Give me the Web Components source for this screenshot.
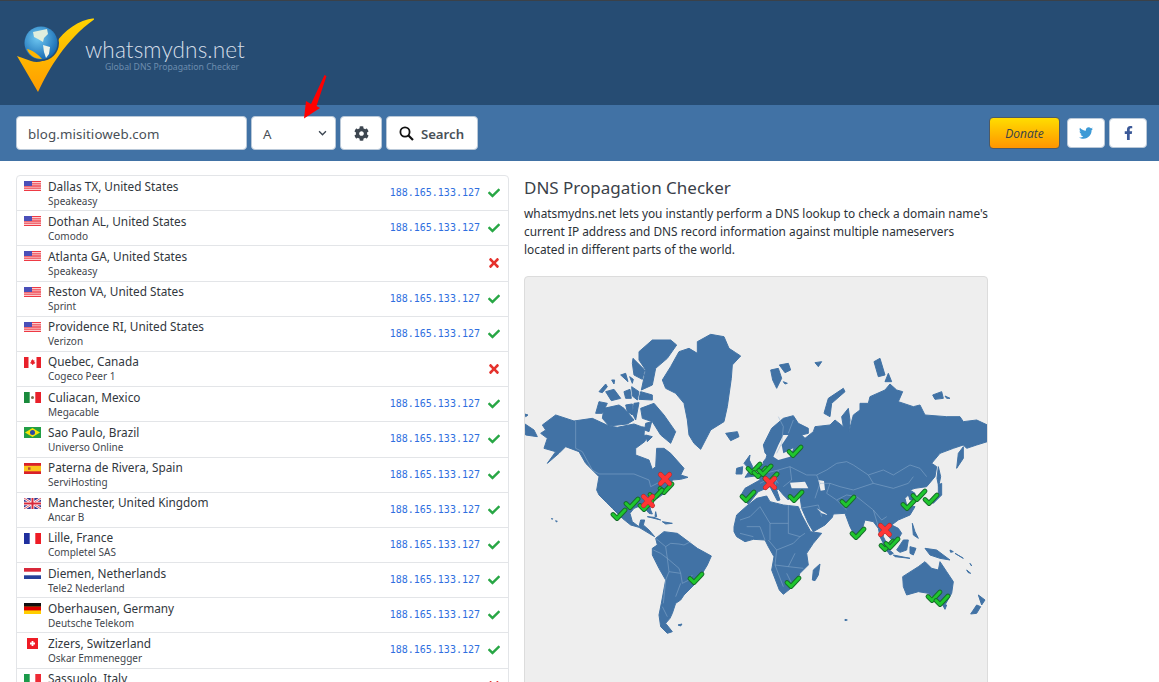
<!DOCTYPE html>
<html>
<head>
<meta charset="utf-8">
<title>DNS Propagation Checker</title>
<style>
html, body { margin: 0; height: 682px; overflow: hidden; background: #fff; }
body { font-family: "Noto Sans", "Open Sans", sans-serif; color: #212529; position: relative; }
</style>
</head>
<body>
<site-header></site-header>
<search-bar domain="blog.misitioweb.com" type="A"></search-bar>
<page-main>
    <result-list slot="list"></result-list>
    <intro-panel slot="side"></intro-panel>
</page-main>
<red-arrow></red-arrow>

<script>
const RESULTS = [
    ['us', 'Dallas TX, United States', 'Speakeasy', true],
    ['us', 'Dothan AL, United States', 'Comodo', true],
    ['us', 'Atlanta GA, United States', 'Speakeasy', false],
    ['us', 'Reston VA, United States', 'Sprint', true],
    ['us', 'Providence RI, United States', 'Verizon', true],
    ['ca', 'Quebec, Canada', 'Cogeco Peer 1', false],
    ['mx', 'Culiacan, Mexico', 'Megacable', true],
    ['br', 'Sao Paulo, Brazil', 'Universo Online', true],
    ['es', 'Paterna de Rivera, Spain', 'ServiHosting', true],
    ['gb', 'Manchester, United Kingdom', 'Ancar B', true],
    ['fr', 'Lille, France', 'Completel SAS', true],
    ['nl', 'Diemen, Netherlands', 'Tele2 Nederland', true],
    ['de', 'Oberhausen, Germany', 'Deutsche Telekom', true],
    ['ch', 'Zizers, Switzerland', 'Oskar Emmenegger', true],
    ['it', 'Sassuolo, Italy', 'Aruba', false]
];

const FLAGS = {
    us: `<rect width="17" height="11" fill="#fff"/>
         <path d="M0 .6h17M0 2.800h17M0 5h17M0 7.200h17M0 9.400h17" stroke="#ee3a44" stroke-width="1.300"/>
         <rect width="8" height="5" fill="#4a4fb8"/>`,
    ca: `<rect width="17" height="11" fill="#fff"/><rect width="4.500" height="11" fill="#e8202a"/><rect x="12.500" width="4.500" height="11" fill="#e8202a"/>
         <path d="M8.500 2l1 1.600 1-.4-.3 2.200 1-.4-.3 1.400-1.700.6v1H8.200v-1l-1.700-.6-.3-1.400 1 .4-.3-2.200 1 .4z" fill="#e8202a"/>`,
    mx: `<rect width="17" height="11" fill="#fff"/><rect width="5.700" height="11" fill="#1a8a3c"/><rect x="11.300" width="5.700" height="11" fill="#e8202a"/>
         <circle cx="8.500" cy="5.500" r="1.500" fill="#7a6a4a"/>`,
    br: `<rect width="17" height="11" fill="#229e45"/><path d="M8.500 1L16 5.500 8.500 10 1 5.500z" fill="#f8e509"/><circle cx="8.500" cy="5.500" r="2.500" fill="#2b49a3"/>`,
    es: `<rect width="17" height="11" fill="#d9202a"/><rect y="2.800" width="17" height="5.500" fill="#fbc51d"/><rect x="4" y="4.300" width="2.500" height="2.500" fill="#b5502a"/>`,
    gb: `<rect width="17" height="11" fill="#39398f"/>
         <path d="M0 0l17 11M17 0L0 11" stroke="#fff" stroke-width="2.400"/>
         <path d="M0 0l17 11M17 0L0 11" stroke="#d8283a" stroke-width=".8"/>
         <path d="M8.500 0v11M0 5.500h17" stroke="#fff" stroke-width="3.600"/>
         <path d="M8.500 0v11M0 5.500h17" stroke="#d8283a" stroke-width="2"/>`,
    fr: `<rect width="17" height="11" fill="#fff"/><rect width="5.700" height="11" fill="#1f2f9e"/><rect x="11.300" width="5.700" height="11" fill="#ee1c25"/>`,
    nl: `<rect width="17" height="11" fill="#fff"/><rect width="17" height="3.700" fill="#d8283a"/><rect y="7.300" width="17" height="3.700" fill="#23409a"/>`,
    de: `<rect width="17" height="11" fill="#ffce00"/><rect width="17" height="3.700" fill="#111"/><rect y="3.700" width="17" height="3.700" fill="#dd0000"/>`,
    ch: `<rect x="3" width="11" height="11" fill="#ee1c25"/><path d="M8.500 3v5M6 5.500h5" stroke="#fff" stroke-width="1.800"/>`,
    it: `<rect width="17" height="11" fill="#fff"/><rect width="5.700" height="11" fill="#1a9a4a"/><rect x="11.300" width="5.700" height="11" fill="#ee2a35"/>`
};

class SiteHeader extends HTMLElement {
    constructor() {
        super();
        this.attachShadow({mode: 'open'});
    }
    connectedCallback() {
        this.shadowRoot.innerHTML = `
        <style>
            :host { display: block; height: 105px; box-sizing: border-box; background: #264c73; border-top: 1px solid #3b4148; }
            .brand { display: flex; align-items: flex-start; padding: 13px 0 0 14px; }
            svg { display: block; width: 80px; height: 78px; flex: none; }
            .names { margin: 22px 0 0 -9px; }
            .name { font: 300 22.600px/28px Lato, sans-serif; color: #d5dee8; letter-spacing: .1px; }
            .tag { font: 400 8.700px/10px "Noto Sans", sans-serif; color: #6d8dae; margin: -2px 0 0 20px; white-space: nowrap; }
        </style>
        <div class="brand">
            <svg viewBox="14 13 80 78">
                <defs>
                    <linearGradient id="gold" x1="0" y1="0" x2="0" y2="1"><stop offset="0" stop-color="#ffd400"/><stop offset="1" stop-color="#ff9c00"/></linearGradient>
                    <radialGradient id="sea" cx=".4" cy=".35" r=".7"><stop offset="0" stop-color="#6fc8f2"/><stop offset="1" stop-color="#1467b0"/></radialGradient>
                </defs>
                <path d="M17 55 L38 91 C50 66 66 38 96 17 C80 18 64 29 56 42 L56 50 C52 58 40 63 31 60 Z" fill="url(#gold)"/>
                <circle cx="41" cy="42" r="18" fill="#264c73"/>
                <circle cx="41" cy="42" r="16.500" fill="url(#sea)"/>
                <path d="M33 31 L47 28 L48 33 L44 37 L43 41 L38 38 L34 36 Z" fill="#dfeedd"/>
                <path d="M43 44 L50 46 L49 53 L46 57 L44 51 Z" fill="#eef3e8"/>
                <path d="M27 48 C32 49 38 53 42 58 C34 58 29 54 27 48 Z" fill="#ffb400"/>
            </svg>
            <div class="names">
                <div class="name">whatsmydns.net</div>
                <div class="tag">Global DNS Propagation Checker</div>
            </div>
        </div>`;
    }
}

class SearchBar extends HTMLElement {
    constructor() {
        super();
        this.attachShadow({mode: 'open'});
    }
    connectedCallback() {
        this.shadowRoot.innerHTML = `
        <style>
            :host { display: flex; align-items: center; height: 56px; padding: 0 12px 0 16px; background: #4172a5; font-family: "Noto Sans", sans-serif; }
            .box { box-sizing: border-box; height: 34px; background: #fff; border: 1px solid #b9c8d8; border-radius: 4px; display: flex; align-items: center; color: #495057; font-size: 13.300px; }
            .box span, .input { padding-top: 1px; }
            .input { width: 231px; padding-left: 11px; letter-spacing: .1px; }
            .select { width: 85px; margin-left: 4px; padding: 0 8px 0 11px; justify-content: space-between; }
            .btn { justify-content: center; margin-left: 4px; }
            .gear { width: 42px; }
            .search { width: 92px; font-weight: 600; font-size: 13.200px; gap: 7px; padding-right: 1px; }
            .spacer { flex: 1; }
            .donate { width: 71px; height: 32px; border: 1px solid #4d5a66; background: linear-gradient(#ffdd00, #ff9500); font: italic 400 12px "Open Sans", sans-serif; color: #38414a; margin: 0; }
            .social { width: 38px; height: 30px; margin-left: 4px; }
            .tw { margin-left: 7px; }
        </style>
        <div class="box input">${this.getAttribute('domain')}</div>
        <div class="box select"><span>${this.getAttribute('type')}</span>
            <svg width="9" height="6" viewBox="0 0 10 7"><path d="M1 1.500l4 4 4-4" fill="none" stroke="#3a4450" stroke-width="1.600"/></svg>
        </div>
        <div class="box btn gear">
            <svg width="15" height="15" viewBox="0 0 512 512"><path fill="#3d4650" d="M487.400 315.700l-42.600-24.600c4.300-23.200 4.300-47 0-70.200l42.600-24.600c4.900-2.800 7.100-8.600 5.500-14-11.100-35.600-30-67.800-54.700-94.600-3.800-4.100-10-5.100-14.800-2.300L380.800 110c-17.900-15.400-38.500-27.300-60.800-35.100V25.800c0-5.600-3.900-10.500-9.400-11.700-36.700-8.200-74.300-7.800-109.200 0-5.500 1.200-9.400 6.100-9.400 11.700V75c-22.200 7.900-42.800 19.800-60.800 35.100L88.700 85.500c-4.900-2.800-11-1.900-14.800 2.300-24.700 26.700-43.600 58.900-54.700 94.600-1.700 5.400.6 11.200 5.500 14L67.300 221c-4.300 23.200-4.300 47 0 70.200l-42.600 24.600c-4.900 2.800-7.100 8.600-5.500 14 11.100 35.600 30 67.800 54.700 94.600 3.800 4.100 10 5.100 14.800 2.300l42.600-24.600c17.900 15.400 38.500 27.300 60.800 35.100v49.200c0 5.600 3.900 10.500 9.400 11.700 36.700 8.200 74.300 7.800 109.200 0 5.500-1.200 9.400-6.100 9.400-11.700v-49.200c22.200-7.900 42.800-19.800 60.800-35.100l42.600 24.600c4.900 2.800 11 1.900 14.800-2.300 24.700-26.700 43.600-58.900 54.700-94.600 1.500-5.500-.7-11.300-5.600-14.100zM256 336c-44.100 0-80-35.900-80-80s35.900-80 80-80 80 35.900 80 80-35.900 80-80 80z"/></svg>
        </div>
        <div class="box btn search">
            <svg width="15" height="15" viewBox="0 0 15 15"><circle cx="6" cy="6" r="4.600" fill="none" stroke="#111" stroke-width="1.800"/><path d="M9.500 9.500l4.500 4.500" stroke="#111" stroke-width="2.200"/></svg>
            <span>Search</span>
        </div>
        <div class="spacer"></div>
        <div class="box btn donate">Donate</div>
        <div class="box btn social tw">
            <svg width="14" height="14" viewBox="0 0 512 512"><path fill="#3d9ad6" d="M459.370 151.716c.325 4.548.325 9.097.325 13.645 0 138.720-105.583 298.558-298.558 298.558-59.452 0-114.680-17.219-161.137-47.106 8.447.974 16.568 1.299 25.340 1.299 49.055 0 94.213-16.568 130.274-44.832-46.132-.975-84.792-31.188-98.112-72.772 6.498.974 12.995 1.624 19.818 1.624 9.421 0 18.843-1.300 27.614-3.573-48.081-9.747-84.143-51.980-84.143-102.985v-1.299c13.969 7.797 30.214 12.670 47.431 13.319-28.264-18.843-46.781-51.005-46.781-87.391 0-19.492 5.197-37.360 14.294-52.954 51.655 63.675 129.300 105.258 216.365 109.807-1.624-7.797-2.599-15.918-2.599-24.040 0-57.828 46.782-104.934 104.934-104.934 30.213 0 57.502 12.670 76.670 33.137 23.715-4.548 46.456-13.320 66.599-25.340-7.798 24.366-24.366 44.833-46.132 57.827 21.117-2.273 41.584-8.122 60.426-16.243-14.292 20.791-32.161 39.308-52.628 54.253z"/></svg>
        </div>
        <div class="box btn social">
            <svg width="9" height="14" viewBox="0 0 320 512"><path fill="#3b5998" d="M279.140 288l14.220-92.660h-88.910v-60.130c0-25.350 12.420-50.060 52.240-50.060h40.420V6.260S260.430 0 225.360 0c-73.220 0-121.080 44.380-121.080 124.720v70.620H22.890V288h81.390v224h100.170V288z"/></svg>
        </div>`;
    }
}

class PageMain extends HTMLElement {
    constructor() {
        super();
        this.attachShadow({mode: 'open'});
    }
    connectedCallback() {
        this.shadowRoot.innerHTML = `
        <style>
            :host { display: flex; align-items: flex-start; padding: 14px 0 0 16px; gap: 15px; }
        </style>
        <slot name="list"></slot>
        <slot name="side"></slot>`;
    }
}

class ResultList extends HTMLElement {
    constructor() {
        super();
        this.attachShadow({mode: 'open'});
    }
    connectedCallback() {
        this.shadowRoot.innerHTML = `
        <style>
            :host { display: block; width: 493px; box-sizing: border-box; border: 1px solid #e3e5e8; border-radius: 4px 4px 0 0; }
        </style>`;
        RESULTS.forEach((r, i) => {
            const row = document.createElement('result-row');
            row.setAttribute('flag', r[0]);
            row.setAttribute('place', r[1]);
            row.setAttribute('provider', r[2]);
            if (r[3]) row.setAttribute('ip', '188.165.133.127');
            if (i == 0) row.setAttribute('first', '');
            this.shadowRoot.appendChild(row);
        });
    }
}

class ResultRow extends HTMLElement {
    constructor() {
        super();
        this.attachShadow({mode: 'open'});
    }
    connectedCallback() {
        const ip = this.getAttribute('ip');
        const mark = ip
            ? `<svg class="mark" width="12" height="12" viewBox="0 0 512 512"><path fill="#28a745" d="M173.898 439.404l-166.400-166.400c-9.997-9.997-9.997-26.206 0-36.204l36.203-36.204c9.997-9.998 26.207-9.998 36.204 0L192 312.690 432.095 72.596c9.997-9.997 26.207-9.997 36.204 0l36.203 36.204c9.997 9.997 9.997 26.206 0 36.204l-294.400 294.401c-9.998 9.997-26.207 9.997-36.204-.001z"/></svg>`
            : `<svg class="mark" width="12" height="12" viewBox="0 40 352 432"><path fill="#e5322d" d="M242.720 256l100.070-100.070c12.280-12.280 12.280-32.190 0-44.480l-22.240-22.240c-12.280-12.280-32.190-12.280-44.480 0L176 189.280 75.930 89.210c-12.280-12.280-32.190-12.280-44.480 0L9.210 111.450c-12.280 12.280-12.280 32.190 0 44.480L109.280 256 9.210 356.070c-12.280 12.280-12.280 32.190 0 44.480l22.240 22.240c12.280 12.280 32.200 12.280 44.480 0L176 322.720l100.070 100.070c12.280 12.280 32.200 12.280 44.480 0l22.240-22.240c12.280-12.280 12.280-32.190 0-44.480L242.720 256z"/></svg>`;
        this.shadowRoot.innerHTML = `
        <style>
            :host { display: flex; box-sizing: border-box; height: 35.200px; padding: 1.500px 8px 0 7px; border-top: 1px solid #e3e5e8; }
            :host([first]) { border-top: 0; height: 34.200px; }
            svg.flag { flex: none; width: 17px; height: 11px; margin: 3.500px 7px 0 0; }
            .text { flex: 1; min-width: 0; }
            .place { font-size: 11.800px; line-height: 17px; color: #31373d; }
            .provider { font-size: 10px; line-height: 12px; color: #3f464d; margin-top: 0; }
            .ip { font: 10px/17px "DejaVu Sans Mono", "Liberation Mono", monospace; color: #2f6fe0; margin: 6.500px 8px 0 0; }
            .mark { flex: none; margin-top: 9.500px; }
        </style>
        <svg class="flag" viewBox="0 0 17 11">${FLAGS[this.getAttribute('flag')]}</svg>
        <div class="text">
            <div class="place">${this.getAttribute('place')}</div>
            <div class="provider">${this.getAttribute('provider')}</div>
        </div>
        ${ip ? `<div class="ip">${ip}</div>` : ''}
        ${mark}`;
    }
}

class IntroPanel extends HTMLElement {
    constructor() {
        super();
        this.attachShadow({mode: 'open'});
    }
    connectedCallback() {
        this.shadowRoot.innerHTML = `
        <style>
            :host { display: block; width: 464px; }
            h1 { font-size: 17px; line-height: 22px; font-weight: 400; color: #3a4149; margin: 2px 0 5px; }
            p { font-size: 11.850px; line-height: 18px; color: #2b3137; margin: 0 0 18px; white-space: nowrap; }
        </style>
        <h1>DNS Propagation Checker</h1>
        <p>whatsmydns.net lets you instantly perform a DNS lookup to check a domain name's<br>current IP address and DNS record information against multiple nameservers<br>located in different parts of the world.</p>
        <world-map></world-map>`;
    }
}

// z7/z9 share the page offset 524,320 and z8/z10 750,320, everything at 3x
class WorldMap extends HTMLElement {
    constructor() {
        super();
        this.attachShadow({mode: 'open'});
    }
    connectedCallback() {
        const checks = [[795,451],[754,468],[760,472],[765,470],[771,478],[748,496],[666,488],[656,494],[619,514],[632,503],[646,505],[696,578],[796,496],[848,501],[909,504],[919,495],[931,499],[858,533],[887,545],[892,543],[793,582],[934,596],[942,600]];
        const crosses = [[665,479],[648,501],[770,483],[885,530]];
        this.shadowRoot.innerHTML = `
        <style>
            :host { display: block; height: 440px; box-sizing: border-box; background: #eee; border: 1px solid #dcdcdc; border-radius: 4px; overflow: hidden; }
            svg { display: block; width: 464px; height: 440px; margin: -1px; }
            .land { fill: #4172a5; stroke: #4172a5; stroke-width: 3; stroke-linejoin: round; }
            .sea { fill: #eee; }
            .line { fill: none; stroke: #8fb0d0; stroke-width: 1.500; }
        </style>
        <svg viewBox="524 276 464 440">
            <defs>
                <symbol id="ok" viewBox="0 0 16 13" overflow="visible">
                    <path d="M2 7l4 4L14 2.500" fill="none" stroke="#176b2a" stroke-width="4.800" stroke-linecap="round" stroke-linejoin="round"/>
                    <path d="M2 7l4 4L14 2.500" fill="none" stroke="#1fc62e" stroke-width="3" stroke-linecap="round" stroke-linejoin="round"/>
                </symbol>
                <symbol id="no" viewBox="0 0 14 14" overflow="visible">
                    <path d="M2.500 2.500l9 9M11.500 2.500l-9 9" stroke="#a33030" stroke-width="5" stroke-linecap="round"/>
                    <path d="M2.500 2.500l9 9M11.500 2.500l-9 9" stroke="#ff3535" stroke-width="4" stroke-linecap="round"/>
                </symbol>
            </defs>
            <g transform="translate(524 320) scale(.33333)">
                <path class="land" d="M55 315L95 285 150 303 205 295 255 318 280 322 330 312 352 320 362 322 360 345 370 350 362 365 335 385 335 405 375 420 385 448 395 440 398 385 420 385 440 400 480 445 470 465 492 472 470 478 445 480 435 510 400 535 395 530 375 545 380 570 385 582 375 580 355 555 330 565 318 580 325 605 345 620 350 600 362 600 358 615 375 630 392 650 375 640 345 622 320 615 295 595 265 565 248 548 225 525 218 510 225 470 205 450 185 430 165 395 125 380 105 400 70 430 95 395 60 385 70 355 50 340 65 330Z"/>
                <path class="land" d="M520 65L560 43 600 50 615 85 635 98 650 108 625 135 622 175 610 260 600 305 560 330 530 388 510 370 495 345 490 300 480 250 455 220 425 205 415 180 440 140 465 95 495 85 520 100Z"/>
                <path class="land" d="M345 95L385 60 440 60 458 75 430 115 395 145 385 195 352 210 365 150 345 120Z"/>
                <path class="land" d="M327 115L362 150 355 178 330 165 325 130ZM350 215L385 225 385 240 345 238ZM215 280L225 245 250 250 235 280ZM240 265L285 255 300 265 330 300 310 312 255 318 235 295ZM350 265L390 250 420 285 455 335 440 370 410 345 385 305 355 295ZM225 215L245 192 250 200 235 218ZM245 215L270 208 290 235 262 242ZM300 215L318 208 322 235 305 235ZM323 200L345 215 340 240 325 228ZM305 255L325 252 325 285 310 275ZM330 250L345 248 335 300 325 280ZM290 165L305 160 312 185ZM317 170L328 178 325 190ZM263 180L272 180 270 192ZM365 310L383 305 375 335 362 330ZM365 345L385 350 370 365ZM605 340L640 335 645 350 620 362ZM0 310L30 330 40 350 5 345ZM2 282L12 285 5 290Z"/>
                <path class="line" d="M155 303V385L175 395 205 450 225 462 330 462 375 480 380 500 430 475"/>
                <!-- caribbean, south america -->
                <path class="land" d="M395 655L420 635 460 640 520 685 562 708 550 735 535 760 510 795 480 825 470 840 455 850 445 880 438 895 425 910 445 935 430 940 410 920 405 885 412 850 425 780 405 745 385 705 385 685 400 675Z"/>
                <path class="land" d="M370 590L410 600 390 592ZM415 605L445 610 425 612ZM395 575L398 590 393 590ZM462 915L474 912 470 918ZM82 596L86 596 85 598ZM95 602L100 604 97 606Z"/>
                <path class="line" d="M395 655L425 680 440 670 465 672 480 675 500 665M425 680L430 715 410 700 388 690M430 715L435 755 470 760 475 790 495 780 505 765M430 715L465 745 470 760M435 755L425 780 418 850M470 790L455 830M415 860L430 890"/>
            </g>
            <g transform="translate(750 320) scale(.33333)">
                <!-- eurasia -->
                <path class="land" d="M40 375L65 325 100 295 130 287 145 310 175 325 175 340 155 345 165 355 190 335 195 320 240 315 255 300 280 320 275 290 295 265 300 300 297 335 310 285 330 270 330 250 355 250 360 230 405 210 420 192 440 210 458 215 445 245 490 260 510 255 525 285 590 290 630 290 640 305 680 300 712 315 712 365 680 375 650 385 640 375 610 385 570 400 545 430 560 440 555 470 530 500 495 505 480 510 495 520 495 535 480 540 475 525 465 535 470 555 495 560 480 585 445 600 425 615 445 625 455 640 440 665 420 655 410 640 400 625 400 650 415 680 420 695 405 680 390 650 385 625 370 605 345 600 330 650 318 655 300 620 285 580 250 582 247 592 225 615 190 635 175 610 155 565 150 530 118 530 122 515 115 540 100 525 75 495 90 540 82 542 60 500 25 515 -5 553 -27 525 -15 505 30 480 25 445 48 415 52 402 58 412 62 418 45 398Z"/>
                <path class="sea" d="M100 345L115 345 95 375 100 400 130 385 120 410 85 420 70 410 85 375ZM120 488L165 485 175 505 125 505ZM205 480L222 483 225 510 212 512ZM200 565L235 585 215 580ZM40 430L20 440 30 420Z"/>
                <path class="land" d="M-18 430L0 405 -2 420 8 440 15 468 -15 472 0 450ZM-40 445L-22 440 -24 462 -42 462ZM62 150L85 145 95 175 80 205 68 180ZM88 135L115 130 122 150 105 158ZM100 185L112 190 105 192ZM195 128L215 125 205 140ZM222 280L235 235 280 205 285 215 245 250 240 290ZM372 125L390 115 405 165 385 170ZM405 185L415 160 425 185ZM548 225L575 215 580 235 555 238ZM585 228L600 235 590 235ZM640 380L625 400 620 445 640 415ZM540 545L565 520 565 495 575 490 575 525 550 550ZM565 440L572 470 566 500 561 475ZM80 495L84 508 72 512Z"/>
                <path class="land" d="M440 690L460 660 475 660 470 690 450 697ZM395 670L430 700 420 705ZM430 705L480 715 435 710ZM480 680L498 685 490 705 480 700ZM487 610L495 635 505 655 490 645ZM525 685L560 690 600 720 570 715 540 705ZM600 690L610 695 602 697ZM615 700L640 715ZM650 750L662 760 655 758ZM660 730L665 738ZM285 898L292 900 285 902Z"/>
                <path class="land" d="M187 780L190 750 210 732 205 765 195 782Z"/>
                <path class="land" d="M458 770L505 740 525 725 545 745 565 750 570 725 590 755 610 785 605 820 585 855 570 850 535 820 505 815 470 825 460 800ZM578 855L590 855 585 868ZM662 882L680 855 692 860 680 880ZM685 825L705 840 695 855Z"/>
                <!-- africa -->
                <path class="land" d="M-48 620L-40 585 -12 560 20 535 50 528 60 545 100 555 145 560 155 585 182 635 215 640 190 670 170 700 175 735 150 760 135 795 100 823 88 810 65 750 72 710 55 680 45 660 10 658 -15 665 -40 650 -48 635Z"/>
                <path class="line" d="M200 465L230 450 260 430 290 425 310 435 355 465 400 450 430 465 480 435 510 445 530 470M355 465L370 490 430 505 475 490 490 470M200 465L210 490 240 490 270 500 310 510 370 490M240 490L230 520 260 540 290 525 320 530M260 540L290 570M320 530L370 570 395 600 410 590M370 570L385 620M210 490L195 535M150 565L205 555M205 555L215 590M85 290L100 320 95 370 80 400M130 300L115 340M45 460L85 450 120 440 170 465 200 465M85 450L75 500M120 440L125 480 100 500M30 490L70 470 85 490"/>
                <path class="line" d="M-30 600L0 590 30 560M30 560L60 610 60 660M60 610L115 610 115 555M115 610L115 640 150 650 165 640M55 660L80 690 130 670 150 650M80 690L75 735 115 740 135 700M75 735L100 800M115 740L160 745M110 760L130 800 M-10 620L30 620 45 660 M-30 640L10 650"/>
            </g>
            ${checks.map(c => `<use href="#ok" x="${c[0] - 8}" y="${c[1] - 6.500}" width="16" height="13"/>`).join('')}
            ${crosses.map(c => `<use href="#no" x="${c[0] - 7}" y="${c[1] - 7}" width="14" height="14"/>`).join('')}
        </svg>`;
    }
}

class RedArrow extends HTMLElement {
    constructor() {
        super();
        this.attachShadow({mode: 'open'});
    }
    connectedCallback() {
        this.shadowRoot.innerHTML = `
        <style>
            :host { display: block; position: absolute; left: 300px; top: 70px; width: 32px; height: 52px; }
        </style>
        <svg width="32" height="52" viewBox="300 70 32 52"><path d="M304 118.500L306 101 311 104 324.500 75 326.500 76 316.500 106 320 108Z" fill="#f00"/></svg>`;
    }
}

customElements.define('site-header', SiteHeader);
customElements.define('search-bar', SearchBar);
customElements.define('page-main', PageMain);
customElements.define('result-row', ResultRow);
customElements.define('result-list', ResultList);
customElements.define('world-map', WorldMap);
customElements.define('intro-panel', IntroPanel);
customElements.define('red-arrow', RedArrow);
</script>
</body>
</html>
